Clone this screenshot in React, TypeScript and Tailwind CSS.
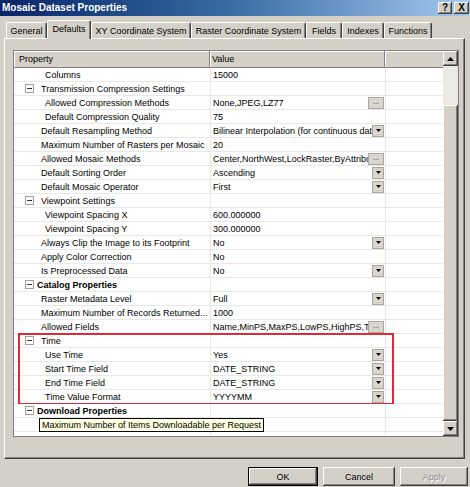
import React from "react";

type Kind = "cat" | "group" | "item" | "sub";

interface Row {
  kind: Kind;
  name: string;
  value?: string;
  ctl?: "drop" | "dots";
}

const upperRows: Row[] = [
  { kind: "sub", name: "Columns", value: "15000" },
  { kind: "group", name: "Transmission Compression Settings" },
  { kind: "sub", name: "Allowed Compression Methods", value: "None,JPEG,LZ77", ctl: "dots" },
  { kind: "sub", name: "Default Compression Quality", value: "75" },
  { kind: "item", name: "Default Resampling Method", value: "Bilinear Interpolation (for continuous data)", ctl: "drop" },
  { kind: "item", name: "Maximum Number of Rasters per Mosaic", value: "20" },
  { kind: "item", name: "Allowed Mosaic Methods", value: "Center,NorthWest,LockRaster,ByAttribute,Nadir,Viewpoint,Seamline,None", ctl: "dots" },
  { kind: "item", name: "Default Sorting Order", value: "Ascending", ctl: "drop" },
  { kind: "item", name: "Default Mosaic Operator", value: "First", ctl: "drop" },
  { kind: "group", name: "Viewpoint Settings" },
  { kind: "sub", name: "Viewpoint Spacing X", value: "600.000000" },
  { kind: "sub", name: "Viewpoint Spacing Y", value: "300.000000" },
  { kind: "item", name: "Always Clip the Image to its Footprint", value: "No", ctl: "drop" },
  { kind: "item", name: "Apply Color Correction", value: "No" },
  { kind: "item", name: "Is Preprocessed Data", value: "No", ctl: "drop" },
  { kind: "cat", name: "Catalog Properties" },
  { kind: "item", name: "Raster Metadata Level", value: "Full", ctl: "drop" },
  { kind: "item", name: "Maximum Number of Records Returned...", value: "1000" },
  { kind: "item", name: "Allowed Fields", value: "Name,MinPS,MaxPS,LowPS,HighPS,Tag,GroupName,ProductName", ctl: "dots" },
];

const timeRows: Row[] = [
  { kind: "group", name: "Time" },
  { kind: "sub", name: "Use Time", value: "Yes", ctl: "drop" },
  { kind: "sub", name: "Start Time Field", value: "DATE_STRING", ctl: "drop" },
  { kind: "sub", name: "End Time Field", value: "DATE_STRING", ctl: "drop" },
  { kind: "sub", name: "Time Value Format", value: "YYYYMM", ctl: "drop" },
];

const tabs = [
  { label: "General", w: "w-[41px]" },
  { label: "Defaults", w: "w-[44px]", active: true },
  { label: "XY Coordinate System", w: "w-[100px]" },
  { label: "Raster Coordinate System", w: "w-[115px]" },
  { label: "Fields", w: "w-[36px]" },
  { label: "Indexes", w: "w-[42px]" },
  { label: "Functions", w: "w-[48px]" },
];

const raised =
  "bg-[#d4d0c8] shadow-[inset_-1px_-1px_0_#404040,inset_1px_1px_0_#ffffff,inset_-2px_-2px_0_#808080,inset_2px_2px_0_#d4d0c8]";

function Arrow({ up }: { up?: boolean }) {
  return (
    <svg width="7" height="4" viewBox="0 0 7 4">
      <polygon points={up ? "3.5,0 7,4 0,4" : "0,0 7,0 3.5,4"} fill="#000" />
    </svg>
  );
}

function Expander() {
  return (
    <span className="w-[9px] h-[9px] border border-[#a0a0a0] bg-white flex items-center justify-center shrink-0">
      <span className="w-[5px] h-px bg-[#333]" />
    </span>
  );
}

function CellControl({ ctl }: { ctl?: "drop" | "dots" }) {
  if (ctl === "drop")
    return (
      <span className="w-[12px] h-[12px] shrink-0 bg-[#d9d6d0] border border-[#aaa69e] flex items-center justify-center">
        <svg width="5" height="3" viewBox="0 0 5 3">
          <polygon points="0,0 5,0 2.5,3" fill="#000" />
        </svg>
      </span>
    );
  if (ctl === "dots")
    return (
      <span className="w-[16px] h-[12px] shrink-0 bg-[#d9d6d0] border border-[#aaa69e] flex items-end justify-center text-[8px] leading-[8px] text-[#333] pb-[2px]">
        ...
      </span>
    );
  return null;
}

function PropRow({ row, tooltip }: { row: Row; tooltip?: string }) {
  const pad =
    row.kind === "sub" ? "pl-[31px]" : row.kind === "item" ? "pl-[27px]" : "pl-[11px]";
  return (
    <div className="relative grid grid-cols-[196px_175px_58px] h-[14px] border-b border-[#e8e8e8] bg-white shrink-0">
      <div className={`flex items-center overflow-hidden whitespace-nowrap ${pad}`}>
        {(row.kind === "cat" || row.kind === "group") && <Expander />}
        <span
          className={
            row.kind === "cat" ? "ml-[3px] font-bold" : row.kind === "group" ? "ml-[7px]" : ""
          }
        >
          {row.name}
        </span>
      </div>
      <div className="flex items-center border-l border-[#e8e8e8] pl-[2px] pr-px overflow-hidden">
        <span className="flex-1 min-w-0 overflow-hidden whitespace-nowrap">{row.value}</span>
        <CellControl ctl={row.ctl} />
      </div>
      <div className="border-l border-[#e8e8e8]" />
      {tooltip && (
        <div className="absolute left-[25px] top-0 h-[14px] border border-black bg-[#ffffe1] px-[2px] leading-[12px] whitespace-nowrap">
          {tooltip}
        </div>
      )}
    </div>
  );
}

function Grid() {
  return (
    <div className="w-[446px] h-[387px] border border-[#7f7f7f] flex bg-white">
      <div className="w-[429px] flex flex-col overflow-hidden">
        <div className="grid grid-cols-[196px_175px_58px] h-[17px] shrink-0 bg-[#d4d0c8] border-b border-[#808080] leading-[16px]">
          <div className="pl-[5px] border-r border-[#808080] shadow-[inset_1px_1px_0_#ffffff]">Property</div>
          <div className="pl-[2px] border-r border-[#808080] shadow-[inset_1px_1px_0_#ffffff]">Value</div>
          <div className="shadow-[inset_1px_1px_0_#ffffff]" />
        </div>
        {upperRows.map((r) => (
          <PropRow key={r.name} row={r} />
        ))}
        <div className="relative flex flex-col shrink-0">
          {timeRows.map((r) => (
            <PropRow key={r.name} row={r} />
          ))}
          <div className="absolute left-[4px] top-[-1px] w-[376px] h-[72px] border-2 border-[#dc2a36] pointer-events-none" />
        </div>
        <PropRow row={{ kind: "cat", name: "Download Properties" }} />
        <PropRow
          row={{ kind: "item", name: "" }}
          tooltip="Maximum Number of Items Downloadable per Request"
        />
        <PropRow row={{ kind: "item", name: "" }} />
      </div>
      <div className="w-[15px] flex flex-col bg-[#ebe9e5]">
        <div className={`h-[15px] shrink-0 flex items-center justify-center ${raised}`}>
          <Arrow up />
        </div>
        <div className="h-[39px] shrink-0" />
        <div className={`flex-1 ${raised}`} />
        <div className={`h-[15px] shrink-0 flex items-center justify-center ${raised}`}>
          <Arrow />
        </div>
      </div>
    </div>
  );
}

export default function App() {
  return (
    <div className="w-[470px] h-[487px] bg-[#d4d0c8] flex flex-col overflow-hidden text-black text-[9px] leading-[14px] font-['Liberation_Sans',Arial,sans-serif]">
      <div className="h-[16px] shrink-0 bg-linear-to-r from-[#0a246a] via-[#3a6ea5] to-[#a6caf0] flex items-center justify-between pl-[2px] pr-[1px]">
        <span className="text-white font-bold text-[10px] leading-[16px]">Mosaic Dataset Properties</span>
        <div className="flex gap-[2px]">
          <span className={`w-[14px] h-[12px] flex items-center justify-center font-bold text-[10px] leading-[12px] ${raised}`}>?</span>
          <span className={`w-[15px] h-[12px] flex items-center justify-center font-bold text-[10px] leading-[12px] ${raised}`}>X</span>
        </div>
      </div>

      <div className="mt-[4px] h-[18px] shrink-0 flex items-end pl-[6px]">
        {tabs.map((t) =>
          t.active ? (
            <div
              key={t.label}
              className={`${t.w} h-[19px] -mb-px relative z-10 bg-[#d4d0c8] border-t border-l border-white border-r border-r-[#404040] shadow-[inset_-1px_0_0_#808080] rounded-t-[2px] flex items-center justify-center pb-[2px]`}
            >
              {t.label}
            </div>
          ) : (
            <div
              key={t.label}
              className={`${t.w} h-[16px] border-t border-l border-white border-r border-r-[#404040] shadow-[inset_-1px_0_0_#808080] rounded-t-[2px] flex items-center justify-center`}
            >
              {t.label}
            </div>
          )
        )}
      </div>

      <div className="mx-[4px] w-[461px] h-[421px] shrink-0 border border-t-white border-l-white border-r-[#404040] border-b-[#404040] shadow-[inset_-1px_-1px_0_#808080] pl-[8px] pt-[11px]">
        <Grid />
      </div>

      <div className="mt-[8px] h-[19px] shrink-0 flex justify-end gap-[5px] pr-[2px]">
        <button className={`w-[70px] h-[19px] border border-black ${raised}`}>OK</button>
        <button className={`w-[72px] h-[19px] ${raised}`}>Cancel</button>
        <button className={`w-[68px] h-[19px] text-[#8a8a8a] [text-shadow:1px_1px_0_#ffffff] ${raised}`}>Apply</button>
      </div>
    </div>
  );
}
